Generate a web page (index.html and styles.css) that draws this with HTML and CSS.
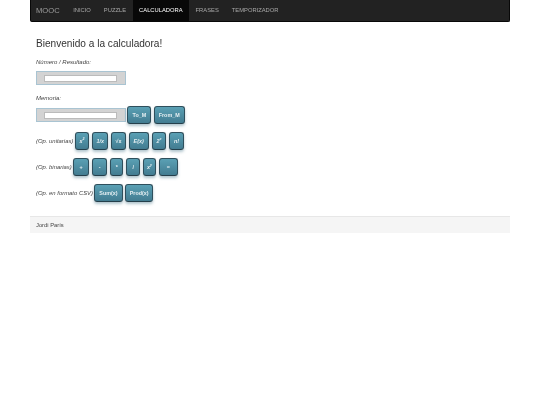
FILE: index.html
```html
<!DOCTYPE html>
<html lang="es">
<head>
<meta charset="utf-8">
<title>Calculadora</title>
<link rel="stylesheet" href="styles.css">
</head>
<body>
<nav class="navbar">
  <span class="brand">MOOC</span>
  <a class="nav-link">INICIO</a>
  <a class="nav-link">PUZZLE</a>
  <a class="nav-link active">CALCULADORA</a>
  <a class="nav-link">FRASES</a>
  <a class="nav-link">TEMPORIZADOR</a>
</nav>
<main class="content">
  <h1>Bienvenido a la calculadora!</h1>
  <p class="label">Número / Resultado:</p>
  <div class="row row-first"><div class="display"><input class="field" type="text"></div></div>
  <p class="label label-mem">Memoria:</p>
  <div class="row row-mem row-tight">
    <div class="display"><input class="field" type="text"></div>
    <button class="btn w24">To_M</button>
    <button class="btn w31">From_M</button>
  </div>
  <div class="row row-ops">
    <span class="op-label">(Op. unitarias)</span>
    <button class="btn w14"><i>x<sup>2</sup></i></button>
    <button class="btn w16"><i>1/x</i></button>
    <button class="btn w14">√x</button>
    <button class="btn w20"><i>E(x)</i></button>
    <button class="btn w14"><i>2<sup>x</sup></i></button>
    <button class="btn w15"><i>n!</i></button>
  </div>
  <div class="row row-ops">
    <span class="op-label">(Op. binarias)</span>
    <button class="btn w16">+</button>
    <button class="btn w15">-</button>
    <button class="btn w13">*</button>
    <button class="btn w13">/</button>
    <button class="btn w13"><i>x<sup>y</sup></i></button>
    <button class="btn w18">=</button>
  </div>
  <div class="row row-ops row-tight">
    <span class="op-label">(Op. en formato CSV)</span>
    <button class="btn w28">Sum(x)</button>
    <button class="btn w29">Prod(x)</button>
  </div>
</main>
<footer class="footer">Jordi París</footer>
</body>
</html>
```
FILE: styles.css
```css
html, body { margin: 0; padding: 0; background: #fff; }
body {
  width: 480px;
  margin: 0 auto;
  font-family: "Liberation Sans", Arial, sans-serif;
  color: #333;
  font-size: 6px;
  filter: blur(.3px);
}
.navbar {
  display: flex;
  align-items: stretch;
  height: 22px;
  background: #222;
  border: 1px solid #080808;
  border-top: 0;
  border-radius: 0 0 2px 2px;
  box-sizing: border-box;
  padding-left: 5px;
}
.brand { font-size: 7.6px; color: #9d9d9d; line-height: 21px; margin-right: 7px; }
.nav-link { font-size: 5.8px; color: #a8a8a8; line-height: 21px; padding: 0 6.5px; }
.nav-link.active { background: #080808; color: #fff; }
.content { padding: 16px 6px 0; height: 194px; box-sizing: border-box; }
h1 { margin: 0; font-size: 10.1px; font-weight: 400; line-height: 12px; color: #333; }
.label { margin: 9px 0 0; font-size: 6px; font-style: italic; color: #444; line-height: 7px; }
.label-mem { margin-top: 10px; }
.row { display: flex; align-items: center; }
.row-first { margin-top: 5px; }
.row-mem { margin-top: 4px; }
.row-ops { margin-top: 8px; }
.display {
  width: 90px;
  height: 14px;
  box-sizing: border-box;
  background: #d3d3d3;
  border: 1px solid #a9c4d2;
  display: flex;
  align-items: center;
  justify-content: center;
}
.field {
  width: 73px;
  height: 7px;
  box-sizing: border-box;
  padding: 0;
  margin: 0 1.5px 0 0;
  border: 1px solid #bbb;
  background: #fff;
}
.btn {
  height: 18px;
  margin-left: 1.4px;
  padding: 0;
  box-sizing: border-box;
  border: 1px solid #2f4f5c;
  border-bottom-color: #243f4b;
  border-radius: 3px;
  background: linear-gradient(#5aa0b4, #427c91);
  color: #e6eff2;
  font-family: "Liberation Sans", Arial, sans-serif;
  font-size: 5.4px;
  font-weight: 700;
  box-shadow: 0 2px 3px rgba(60, 110, 130, .4);
}
.btn + .btn { margin-left: 3px; }
.row-tight .btn + .btn { margin-left: 2.3px; }
.w13 { width: 13.4px; }
.w14 { width: 14.4px; }
.w15 { width: 14.8px; }
.w16 { width: 16.2px; }
.w18 { width: 18.3px; }
.w20 { width: 20px; }
.w24 { width: 24px; }
.w28 { width: 28.3px; }
.w29 { width: 28.5px; }
.w31 { width: 31px; }
.btn sup { font-size: 3.6px; line-height: 0; }
.op-label { font-size: 5.9px; font-style: italic; color: #444; }
.footer {
  height: 17px;
  background: #f5f5f5;
  border-top: 1px solid #e7e7e7;
  box-sizing: border-box;
  padding-left: 6px;
  font-size: 5.8px;
  line-height: 17px;
  color: #444;
}
```
